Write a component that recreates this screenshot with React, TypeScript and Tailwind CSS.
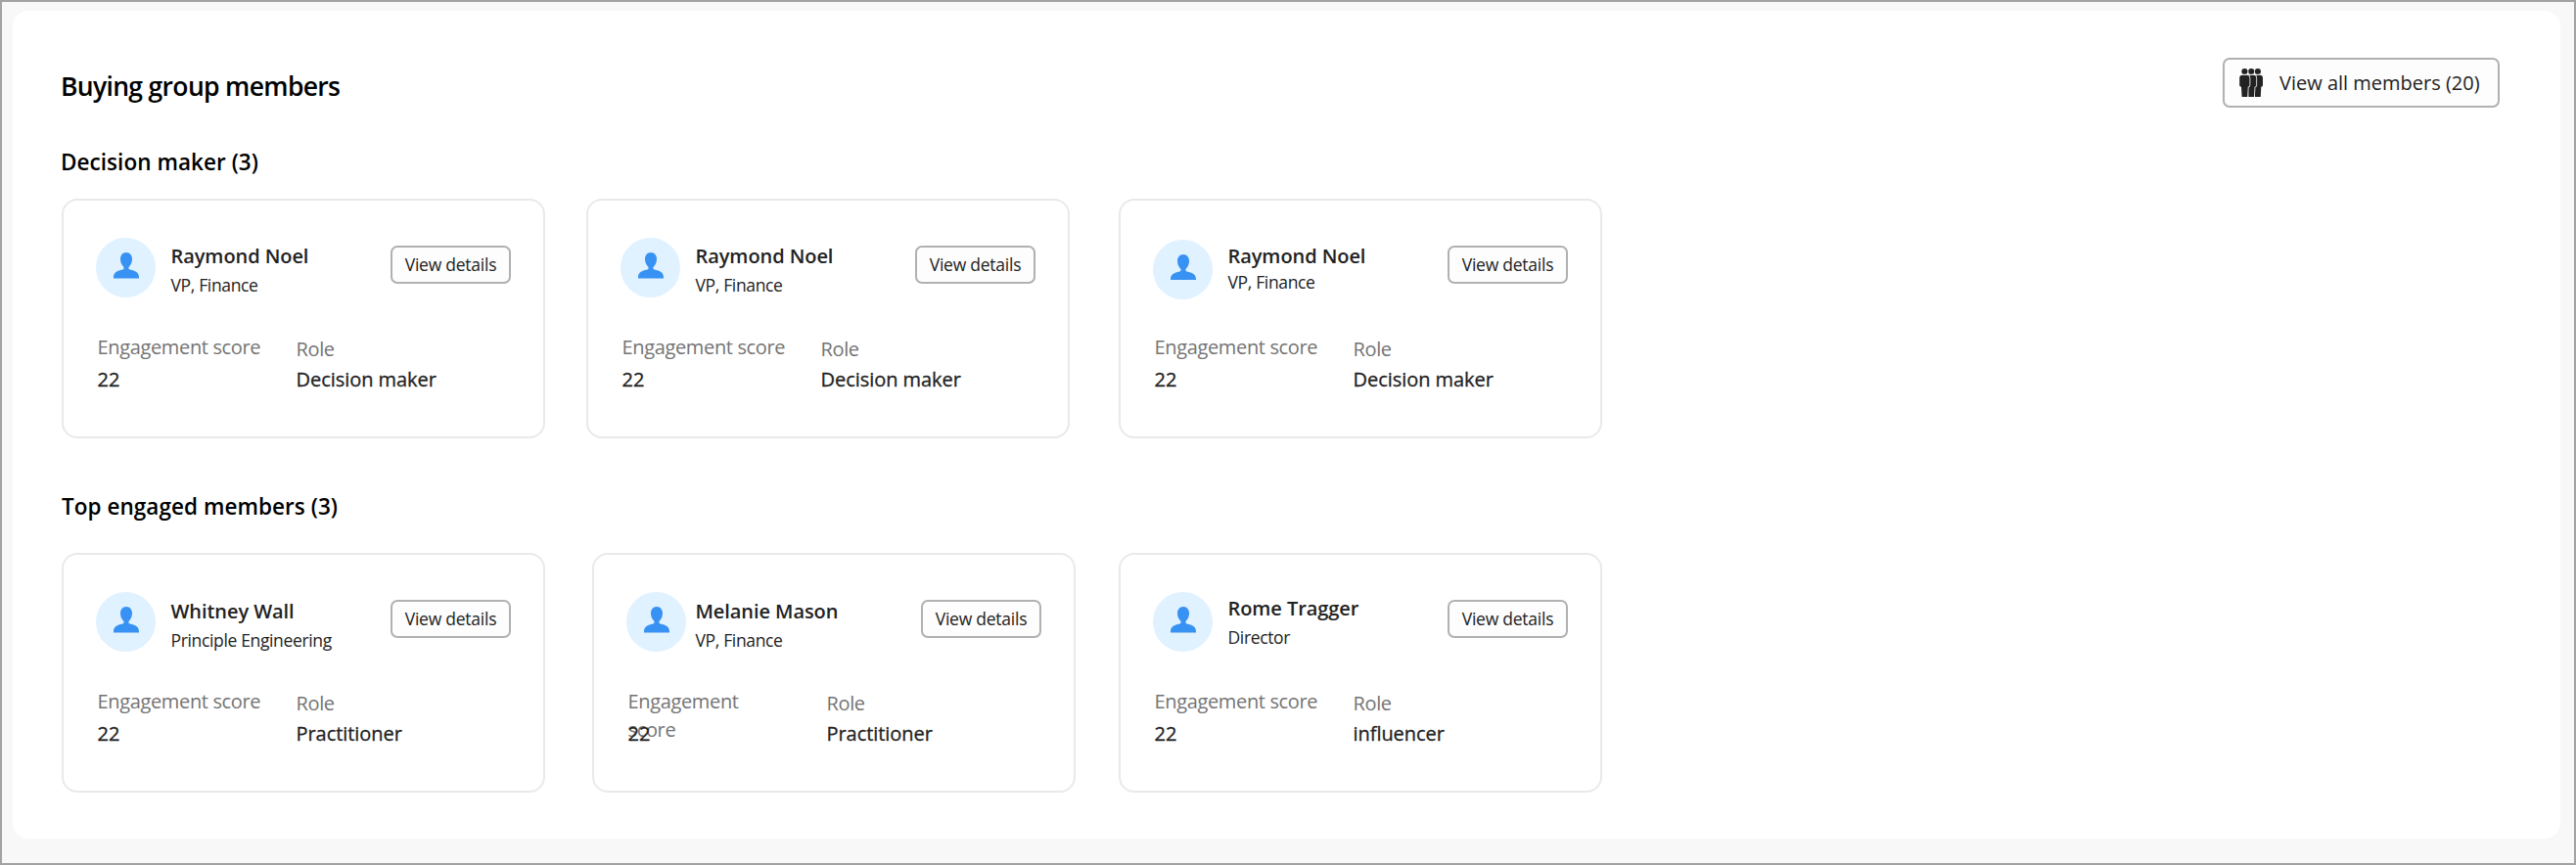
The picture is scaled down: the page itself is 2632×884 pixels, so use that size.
type Member = {
  name: string;
  title: string;
  role: string;
  card?: string;
  avatar?: string;
  text?: string;
  subtitle?: string;
  label?: string;
};

const decisionMakers: Member[] = [
  { name: "Raymond Noel", title: "VP, Finance", role: "Decision maker" },
  { name: "Raymond Noel", title: "VP, Finance", role: "Decision maker", card: "ml-[42px]" },
  {
    name: "Raymond Noel",
    title: "VP, Finance",
    role: "Decision maker",
    card: "ml-[50px]",
    avatar: "mt-[39.5px]",
    subtitle: "-mt-[2px]",
  },
];

const topEngaged: Member[] = [
  { name: "Whitney Wall", title: "Principle Engineering", role: "Practitioner", text: "ml-[15.5px] mt-[44px]" },
  {
    name: "Melanie Mason",
    title: "VP, Finance",
    role: "Practitioner",
    card: "ml-12",
    text: "ml-[9.5px] mt-[44px]",
    label: "w-[150px]",
  },
  { name: "Rome Tragger", title: "Director", role: "influencer", card: "ml-11", text: "ml-[15.5px] mt-[41px]" },
];

function PersonIcon() {
  return (
    <svg viewBox="0 0 26 26.5" className="h-[26.5px] w-[26px] fill-[#3892f3]">
      <path d="M13 0C16.600 0 19 2.800 19 6.800c0 3-1.200 5.600-2.900 7.400-.5.5-.7 1.100-.7 1.800 0 .8.5 1.300 1.300 1.500C22.300 18.500 26 20.800 26 25.200v1.300H0v-1.300C0 20.800 3.700 18.500 9.300 17.500c.8-.2 1.300-.7 1.300-1.500 0-.7-.2-1.300-.7-1.800C8.200 12.400 7 9.800 7 6.800 7 2.800 9.400 0 13 0z" />
    </svg>
  );
}

function Figure({ x }: { x: number }) {
  return (
    <g transform={`translate(${x} 0)`} className="fill-[#222222] stroke-[#fdfdfd]" strokeWidth={1.6} style={{ paintOrder: "stroke" }}>
      <path d="M3.200 6.700h4.400c1.900 0 2.900 1.300 2.900 3v7.200c0 1-.6 1.600-1.700 1.800L8.300 29H2.600L2 18.700C.8 18.500.2 17.900.2 16.900V9.700c0-1.700 1.100-3 3-3z" />
      <ellipse cx="5.400" cy="2.900" rx="3.100" ry="2.900" />
    </g>
  );
}

function GroupIcon() {
  return (
    <svg viewBox="0 0 24 29" className="h-[29px] w-6 overflow-visible">
      <Figure x={13.5} />
      <Figure x={6.8} />
      <Figure x={0} />
    </svg>
  );
}

function Stat({ label, value, labelClass = "", valueClass = "" }: { label: string; value: string; labelClass?: string; valueClass?: string }) {
  return (
    <div className="w-[203px]">
      <div className={`h-[29px] text-[20px] leading-[29px] tracking-[-0.35px] text-[#747474] ${labelClass}`}>{label}</div>
      <div className={`text-[20px] leading-[29px] tracking-[-0.05px] text-[#222222] [-webkit-text-stroke:0.3px_#222222] ${valueClass}`}>{value}</div>
    </div>
  );
}

function MemberCard({ m }: { m: Member }) {
  return (
    <article className={`h-[245px] w-[494px] shrink-0 rounded-[16px] border-2 border-[#e9e9e9] pr-[33px] pl-[33px] ${m.card ?? ""}`}>
      <div className="flex h-[135px] items-start">
        <div className={`flex h-[61px] w-[61px] shrink-0 justify-center rounded-full bg-[#e0f1ff] pt-[15px] ${m.avatar ?? "mt-[38px]"}`}>
          <PersonIcon />
        </div>
        <div className={`whitespace-nowrap text-[#222222] ${m.text ?? "ml-[15.5px] mt-[43px]"}`}>
          <div className="text-[20px] leading-7 font-semibold tracking-[-0.07px]">{m.name}</div>
          <div className={`text-[17.5px] leading-7 tracking-[-0.35px] ${m.subtitle ?? "mt-[1px]"}`}>{m.title}</div>
        </div>
        <button className="mt-[46px] ml-auto flex h-[39px] w-[123px] items-center justify-center rounded-[7px] border-2 border-[#b1b1b1] bg-[#fdfdfd] text-[17.5px] tracking-[-0.25px] whitespace-nowrap text-[#222222]">
          View details
        </button>
      </div>
      <div className="flex pl-[1.5px]">
        <Stat label="Engagement score" value="22" labelClass={m.label} valueClass="mt-1" />
        <Stat label="Role" value={m.role} labelClass="mt-[1.5px]" valueClass="mt-[2.5px]" />
      </div>
    </article>
  );
}

export default function App() {
  return (
    <div className="h-[884px] w-[2632px] border-2 border-[#a3a3a3] bg-[#f8f8f8] pt-[9px] pr-[14px] pl-[11px] font-['Open_Sans',sans-serif]">
      <main className="h-[846px] rounded-[16px] bg-white pt-12 pr-[62px] pl-[50px]">
        <header className="flex h-[51px] items-start justify-between">
          <h1 className="mt-[11px] -ml-[1px] text-[26.5px] leading-9 font-semibold tracking-[-0.67px] text-black">Buying group members</h1>
          <button className="flex h-[51px] w-[283px] items-center rounded-[7px] border-2 border-[#b1b1b1] bg-[#fdfdfd] pl-[15px] text-[20px] whitespace-nowrap text-[#222222]">
            <GroupIcon />
            <span className="ml-[17px]">View all members (20)</span>
          </button>
        </header>
        <section className="mt-[40px]">
          <h2 className="-ml-[1px] text-[22.5px] leading-8 font-semibold tracking-[0.05px] text-black">Decision maker (3)</h2>
          <div className="mt-[21px] flex">
            {decisionMakers.map((m, i) => (
              <MemberCard key={i} m={m} />
            ))}
          </div>
        </section>
        <section className="mt-[54px]">
          <h2 className="text-[22.5px] leading-8 font-semibold tracking-[0.05px] text-black">Top engaged members (3)</h2>
          <div className="mt-[31px] flex">
            {topEngaged.map((m, i) => (
              <MemberCard key={i} m={m} />
            ))}
          </div>
        </section>
      </main>
    </div>
  );
}
